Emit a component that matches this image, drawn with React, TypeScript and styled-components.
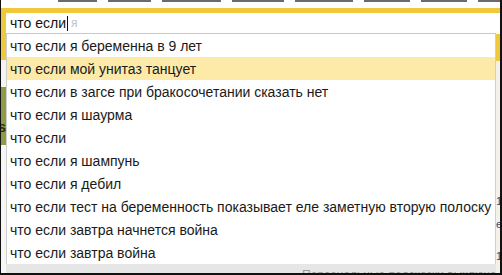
import React from 'react';
import styled, { createGlobalStyle } from 'styled-components';

const GlobalStyle = createGlobalStyle`
  html, body {
    margin: 0;
    padding: 0;
    background: #fff;
  }
  body {
    font-family: "Liberation Sans", Arial, sans-serif;
  }
`;

const Frame = styled.div`
  width: 502px;
  height: 275px;
  box-sizing: border-box;
  border-left: 1px solid #111;
  border-right: 2px solid #111;
  border-bottom: 2px solid #111;
  display: flex;
  flex-direction: column;
  overflow: hidden;
  background: #fff;
`;

const LinksBar = styled.div`
  height: 8px;
  flex-shrink: 0;
  display: flex;
  align-items: flex-start;
  padding-left: 57px;
  gap: 11px;
`;

const LinkDash = styled.span<{ $w: number }>`
  display: block;
  width: ${p => p.$w}px;
  height: 2px;
  align-self: flex-start;
  background: #6a6a6a;
`;

const YellowBar = styled.div`
  height: 5px;
  flex-shrink: 0;
  background: #efc93a;
`;

const Body = styled.div`
  flex: 1;
  display: flex;
  min-height: 0;
`;

const Gutter = styled.div<{ $w: number }>`
  width: ${p => p.$w}px;
  display: flex;
  flex-direction: column;
  flex-shrink: 0;
`;

const Strip = styled.div<{ $h: number; $bg: string }>`
  height: ${p => p.$h}px;
  background: ${p => p.$bg};
  flex-shrink: 0;
  position: relative;
  overflow: hidden;
`;

const GreenLetter = styled.span`
  position: absolute;
  right: 0;
  top: 33px;
  font-size: 14px;
  font-weight: bold;
  color: #2c3310;
  line-height: 1;
`;

const BlueBit = styled.span<{ $top: number }>`
  position: absolute;
  left: 0;
  top: ${p => p.$top}px;
  font-size: 11px;
  color: #2a4d8a;
  line-height: 1;
`;

const Center = styled.div`
  flex: 1;
  display: flex;
  flex-direction: column;
  min-width: 0;
`;

const InputRow = styled.div`
  height: 20px;
  flex-shrink: 0;
  display: flex;
  align-items: center;
  padding-left: 4px;
  font-size: 14px;
  color: #111;
  border-bottom: 1px solid #c9c9c9;
`;

const Caret = styled.span`
  display: inline-block;
  width: 1px;
  height: 15px;
  background: #111;
  margin: 0 3px 0 1px;
`;

const Hint = styled.span`
  color: #c4c4c4;
  font-size: 12px;
`;

const List = styled.div`
  flex-shrink: 0;
  display: flex;
  flex-direction: column;
  border-left: 1px solid #cfcfcf;
  border-right: 1px solid #cfcfcf;
`;

const Row = styled.div<{ $active?: boolean }>`
  height: 23px;
  flex-shrink: 0;
  display: flex;
  align-items: center;
  padding-left: 3px;
  font-size: 14px;
  color: #1a1a1a;
  white-space: nowrap;
  background: ${p => (p.$active ? '#fdeaa9' : '#fff')};
`;

const Footer = styled.div`
  flex: 1;
  min-height: 0;
  background: #e6e6e6;
  overflow: hidden;
  padding: 4px 0 0 296px;
  font-size: 12px;
  color: #9a9a9a;
  white-space: nowrap;
  line-height: 14px;
`;

const suggestions = [
  'что если я беременна в 9 лет',
  'что если мой унитаз танцует',
  'что если в загсе при бракосочетании сказать нет',
  'что если я шаурма',
  'что если',
  'что если я шампунь',
  'что если я дебил',
  'что если тест на беременность показывает еле заметную вторую полоску',
  'что если завтра начнется война',
  'что если завтра война',
];

const dashes = [40, 43, 60, 53, 58, 47, 47, 22];

export default function App() {
  return (
    <>
      <GlobalStyle />
      <Frame>
        <LinksBar>
          {dashes.map((w, i) => (
            <LinkDash key={i} $w={w} />
          ))}
        </LinksBar>
        <YellowBar />
        <Body>
          <Gutter $w={5}>
            <Strip $h={47} $bg="#efc93a" />
            <Strip $h={27} $bg="#f4f4f4" />
            <Strip $h={58} $bg="#8f9c45">
              <GreenLetter>s</GreenLetter>
            </Strip>
            <Strip $h={130} $bg="#f6f6f6" />
          </Gutter>
          <Center>
            <InputRow>
              что если
              <Caret />
              <Hint>я</Hint>
            </InputRow>
            <List>
              {suggestions.map((s, i) => (
                <Row key={i} $active={i === 1}>
                  {s}
                </Row>
              ))}
            </List>
            <Footer>Персональные подсказки выключены</Footer>
          </Center>
          <Gutter $w={4}>
            <Strip $h={21} $bg="#fff" />
            <Strip $h={27} $bg="#efc93a" />
            <Strip $h={212} $bg="#f3f1ea">
              <BlueBit $top={135}>1</BlueBit>
              <BlueBit $top={158}>e</BlueBit>
              <BlueBit $top={190}>1</BlueBit>
            </Strip>
          </Gutter>
        </Body>
      </Frame>
    </>
  );
}
